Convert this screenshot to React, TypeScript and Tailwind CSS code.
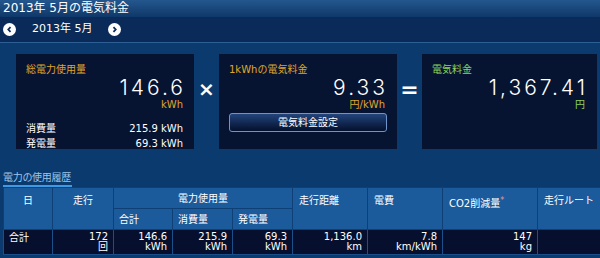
import React from 'react';

const jp = { fontFamily: '"DejaVu Sans", "Noto Sans CJK JP", sans-serif' };
const thin = { fontFamily: 'Inter, "Noto Sans", sans-serif' };

const Arrow: React.FC<{ dir: 'left' | 'right' }> = ({ dir }) => (
  <div className="w-[13px] h-[13px] rounded-full bg-white flex items-center justify-center">
    <svg width="7" height="7" viewBox="0 0 8 8">
      <path
        d={dir === 'left' ? 'M5.2 1.2 L2.6 4 L5.2 6.8' : 'M2.8 1.2 L5.4 4 L2.8 6.8'}
        fill="none"
        stroke="#0a2a57"
        strokeWidth="2"
      />
    </svg>
  </div>
);

const cols = [49, 61, 59, 60, 60, 75, 75, 95, 63];

const dataRow = [
  ['172', '回'],
  ['146.6', 'kWh'],
  ['215.9', 'kWh'],
  ['69.3', 'kWh'],
  ['1,136.0', 'km'],
  ['7.8', 'km/kWh'],
  ['147', 'kg'],
];

export default function App() {
  return (
    <div className="w-[600px] h-[258px] overflow-hidden bg-[#0b3a6f] text-white" style={jp}>
      {/* title */}
      <div className="h-[17px] bg-gradient-to-b from-[#24578e] to-[#0f3869] px-[3px] text-[12px] leading-[17px]">
        2013年 5月の電気料金
      </div>
      {/* month nav */}
      <div className="h-[26px] bg-[#0a2b59] flex items-center pl-[3px] border-b border-[#2d5f94]">
        <Arrow dir="left" />
        <span className="ml-[16px] mr-[15px] text-[11px]">2013年 5月</span>
        <Arrow dir="right" />
      </div>

      {/* summary cards */}
      <div className="flex items-start pl-[16px] pt-[11px]">
        <div className="w-[178px] h-[95px] bg-[#071431] pl-[10px] pr-[11px] pt-[10px]">
          <div className="text-[10px] leading-[12px] text-[#e0a52a]">総電力使用量</div>
          <div className="text-right text-[21px] leading-[22px] font-light tracking-[3px] -mr-[3px] mt-[1px]" style={thin}>146.6</div>
          <div className="text-right text-[10px] leading-[12px] text-[#e0a52a]">kWh</div>
          <div className="flex justify-between text-[10px] leading-[15px] mt-[10px]">
            <span>消費量</span>
            <span>215.9 kWh</span>
          </div>
          <div className="flex justify-between text-[10px] leading-[15px]">
            <span>発電量</span>
            <span>69.3 kWh</span>
          </div>
        </div>
        <div className="w-[25px] h-[70px] flex items-center justify-center text-[20px] font-bold">×</div>
        <div className="w-[178px] h-[95px] bg-[#071431] px-[10px] pt-[10px]">
          <div className="text-[10px] leading-[12px] text-[#e0a52a]">1kWhの電気料金</div>
          <div className="text-right text-[21px] leading-[22px] font-light tracking-[3px] -mr-[1px] mt-[1px]" style={thin}>9.33</div>
          <div className="text-right text-[10px] leading-[12px] text-[#e0a52a] pr-[2px]">円/kWh</div>
          <div className="mt-[2px] h-[19px] rounded-[3px] border border-[#6d95cc] bg-gradient-to-b from-[#23457c] to-[#05102e] flex items-center justify-center text-[10px]">
            電気料金設定
          </div>
        </div>
        <div className="w-[25px] h-[70px] flex items-center justify-center text-[22px] font-bold">=</div>
        <div className="w-[175px] h-[95px] bg-[#071431] pl-[10px] pr-[12px] pt-[10px]">
          <div className="text-[10px] leading-[12px] text-[#8fd45a]">電気料金</div>
          <div className="text-right text-[21px] leading-[22px] font-light tracking-[3px] -mr-[3px] mt-[1px]" style={thin}>1,367.41</div>
          <div className="text-right text-[10px] leading-[12px] text-[#8fd45a]">円</div>
        </div>
      </div>

      {/* history */}
      <div className="mt-[22px] pl-[3px]">
        <div className="w-[69px] whitespace-nowrap text-[10px] leading-[13px] text-[#9fc6ea] border-b-2 border-[#3d9ae4] pb-[1px] tracking-[-0.3px]">
          電力の使用履歴
        </div>
        <table className="table-fixed border-collapse text-[10px] w-[597px]">
          <colgroup>
            {cols.map((w, i) => (
              <col key={i} style={{ width: w }} />
            ))}
          </colgroup>
          <thead>
            <tr className="h-[21px] bg-[#1b5a9b]">
              <th rowSpan={2} className="border border-[#0e4075] align-top pt-[5px] font-normal">日</th>
              <th rowSpan={2} className="border border-[#0e4075] align-top pt-[5px] font-normal">走行</th>
              <th colSpan={3} className="border border-[#0e4075] font-normal">電力使用量</th>
              <th rowSpan={2} className="border border-[#0e4075] align-top pt-[5px] pl-[6px] text-left font-normal">走行距離</th>
              <th rowSpan={2} className="border border-[#0e4075] align-top pt-[5px] pl-[6px] text-left font-normal">電費</th>
              <th rowSpan={2} className="border border-[#0e4075] align-top pt-[8px] pl-[6px] text-left font-normal">
                CO2削減量<sup className="text-[8px] text-[#e39a9a]">*</sup>
              </th>
              <th rowSpan={2} className="border border-[#0e4075] align-top pt-[5px] pl-[6px] text-left font-normal">走行ルート</th>
            </tr>
            <tr className="h-[21px] bg-[#1b5a9b]">
              <th className="border border-[#0e4075] pl-[5px] text-left font-normal">合計</th>
              <th className="border border-[#0e4075] pl-[5px] text-left font-normal">消費量</th>
              <th className="border border-[#0e4075] pl-[5px] text-left font-normal">発電量</th>
            </tr>
          </thead>
          <tbody>
            <tr className="h-[25px] bg-[#06102e]">
              <td className="border border-[#1b4f8a] align-top pl-[5px] pt-[2px] leading-[11px]">合計</td>
              {dataRow.map(([v, u], i) => (
                <td key={i} className="border border-[#1b4f8a] text-right pr-[5px] leading-[10px] align-middle">
                  <div>{v}</div>
                  <div>{u}</div>
                </td>
              ))}
              <td className="border border-[#1b4f8a]"></td>
            </tr>
          </tbody>
        </table>
      </div>
    </div>
  );
}
